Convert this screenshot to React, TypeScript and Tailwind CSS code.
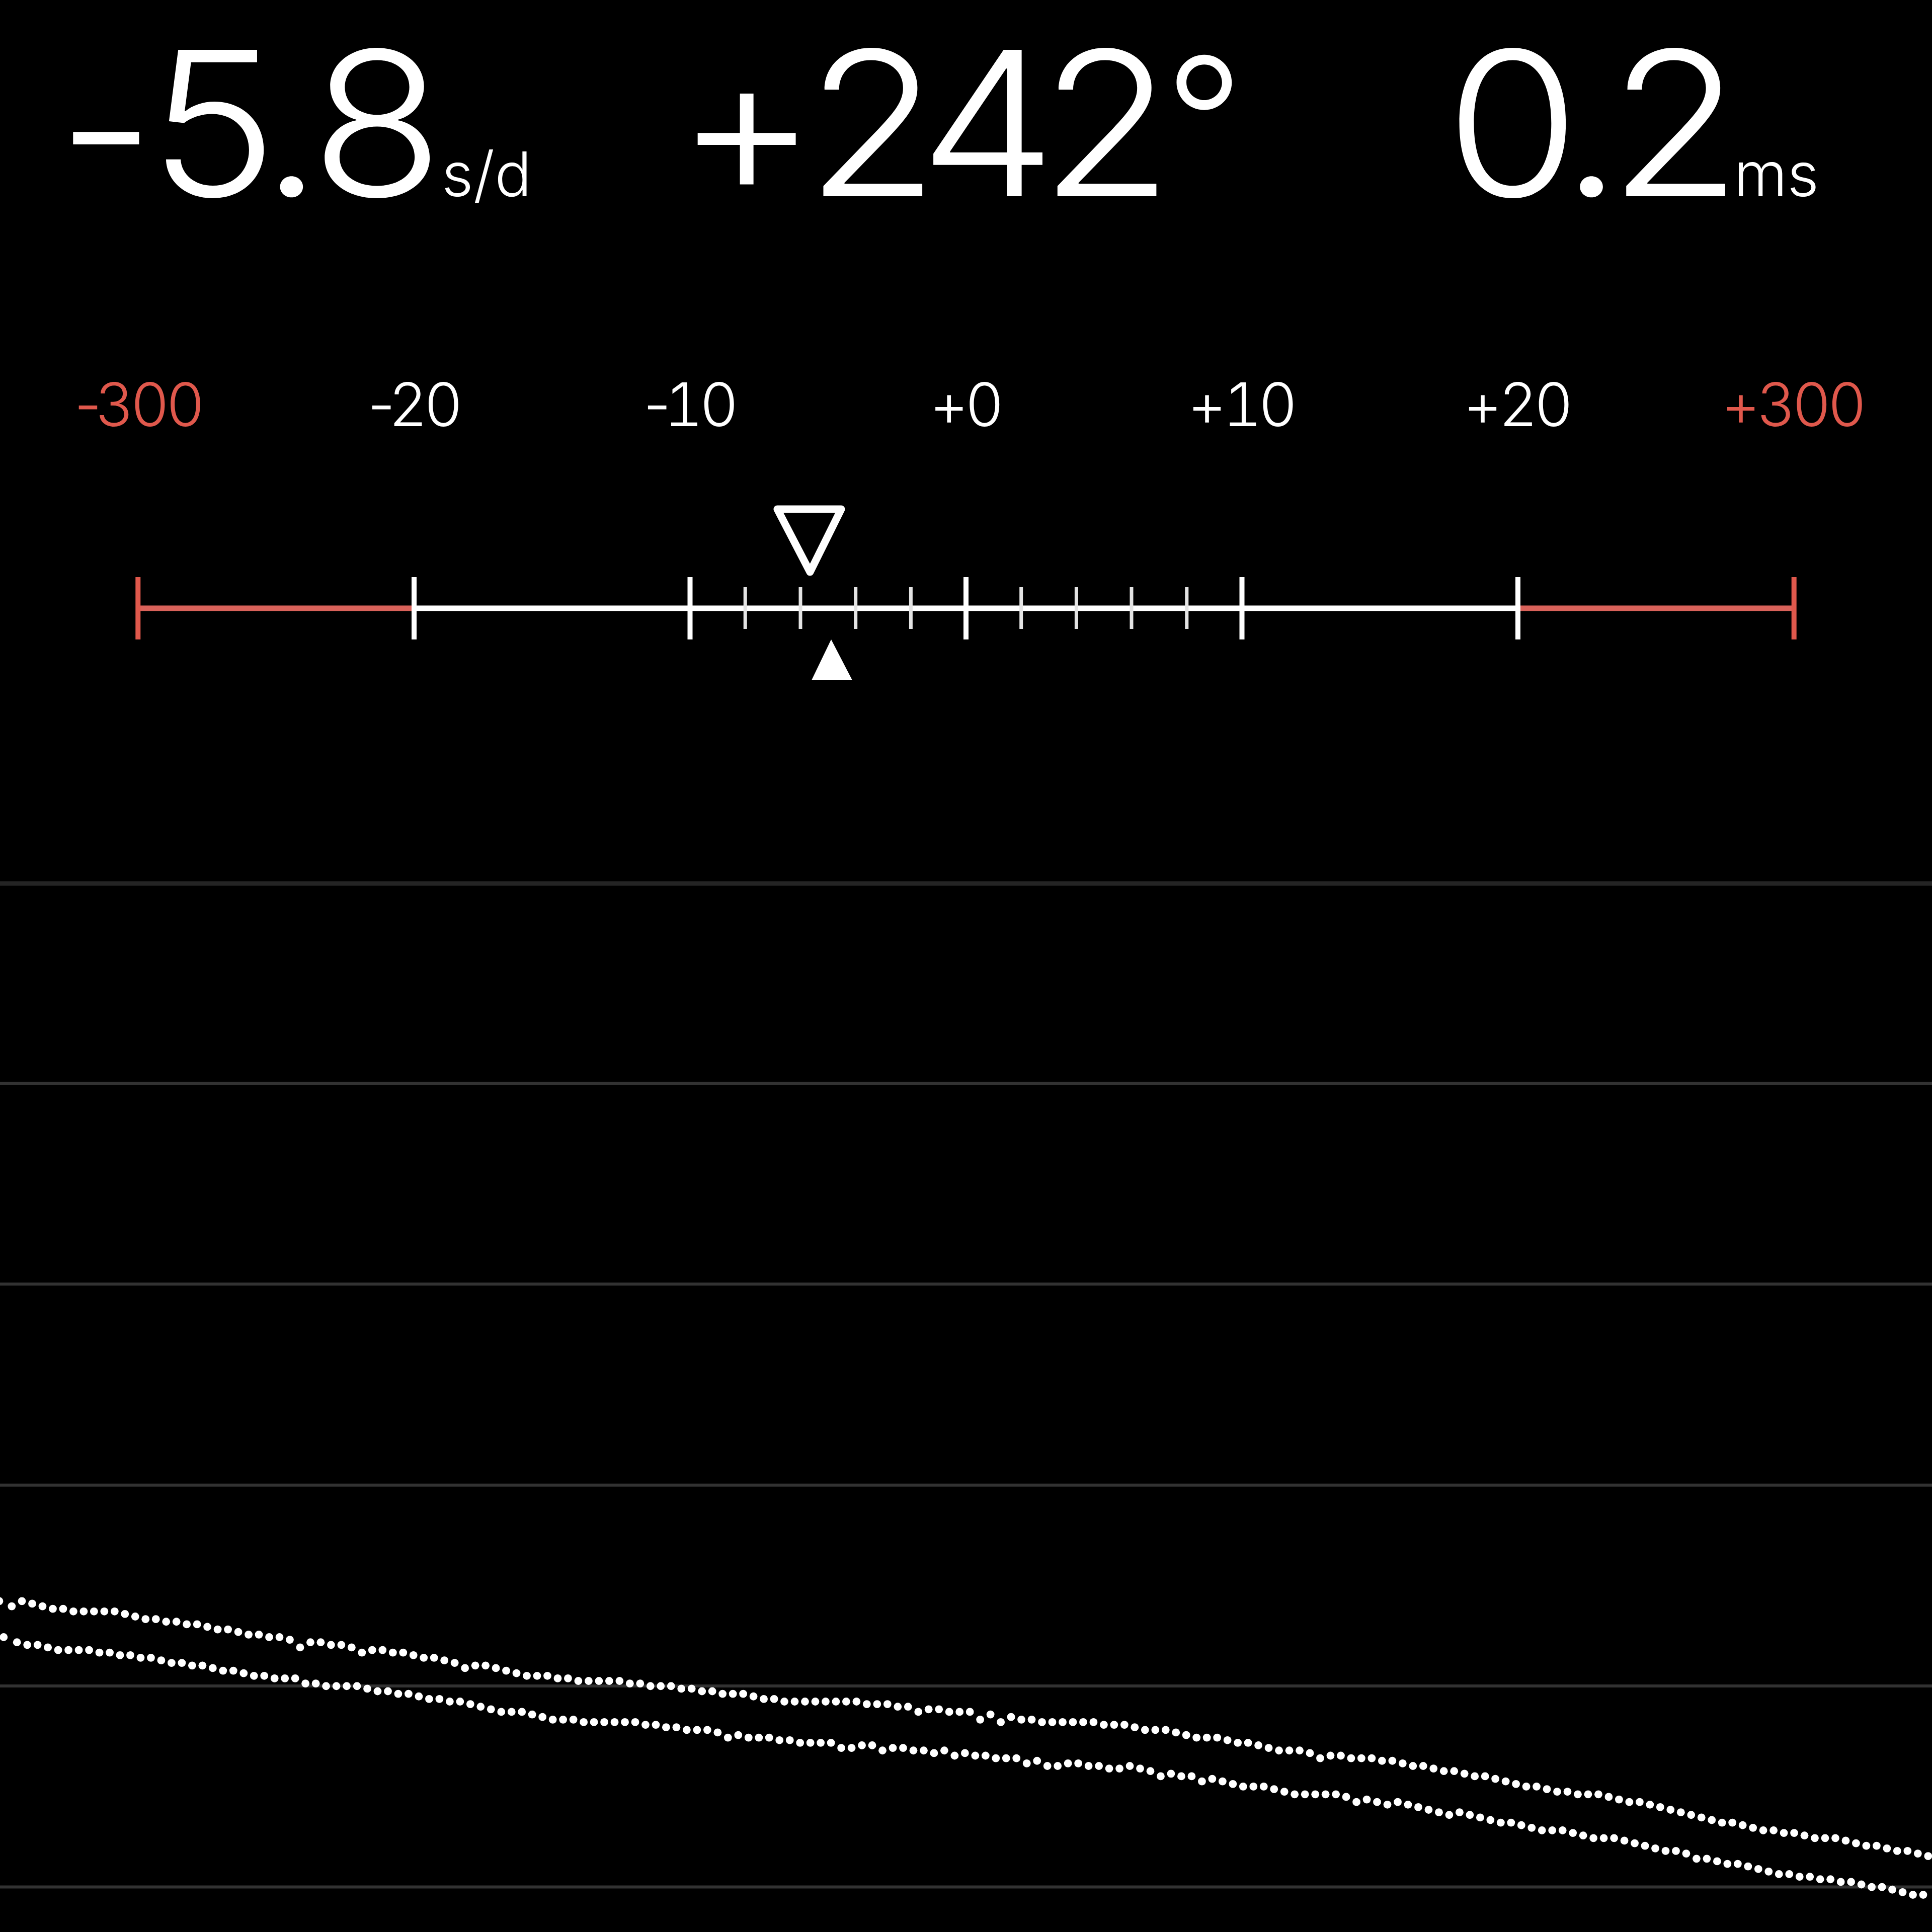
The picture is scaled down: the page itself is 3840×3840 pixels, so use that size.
const DOT_STEP = 20.48
const LEVEL_STEP = 5.12

const GRID_LINES = [753, 1152.3, 1551.7, 1951, 2350.5]

// Beat levels, one entry per recorded tick / tock
const TICKS = [
  0, 1, 2, 3, 3, 4, 4, 4, 4, 4, 5, 6, 7, 7, 8, 8, 9, 9, 10, 11, 11, 12, 13, 13, 14, 14, 15, 18, 16, 16,
  17, 17, 18, 20, 19, 19, 20, 20, 21, 22, 22, 23, 24, 26, 25, 25, 26, 27, 28, 29, 29, 29, 30, 30, 31, 31,
  31, 31, 31, 32, 32, 33, 33, 33, 34, 34, 35, 35, 36, 36, 36, 37, 38, 38, 39, 39, 39, 39, 39, 39, 39, 39,
  40, 40, 40, 41, 41, 43, 42, 42, 43, 43, 43, 46, 44, 47, 45, 46, 46, 47, 47, 47, 47, 47, 47, 48, 48, 48,
  49, 50, 50, 50, 51, 52, 53, 53, 53, 54, 55, 55, 56, 57, 58, 58, 58, 59, 61, 60, 60, 61, 61, 61, 62, 62,
  63, 64, 64, 65, 66, 66, 67, 68, 68, 69, 70, 71, 72, 72, 73, 74, 74, 75, 75, 75, 76, 77, 78, 78, 79, 80,
  81, 82, 83, 84, 85, 86, 86, 87, 88, 89, 89, 90, 90, 91, 92, 92, 92, 93, 94, 95, 95, 96, 97, 97, 98, 99,
]

const TOCKS = [
  16, 17, 17, 18, 19, 19, 19, 19, 20, 20, 21, 21, 22, 22, 23, 24, 24, 25, 25, 26, 27, 27, 28, 29, 29, 30,
  30, 30, 32, 32, 33, 33, 33, 33, 34, 35, 35, 36, 36, 37, 38, 38, 39, 39, 40, 41, 42, 43, 43, 43, 44, 45,
  46, 46, 46, 47, 47, 47, 47, 47, 47, 48, 48, 49, 49, 50, 50, 50, 51, 53, 52, 53, 53, 53, 54, 54, 55, 55,
  55, 55, 57, 57, 56, 56, 58, 57, 57, 58, 58, 59, 58, 60, 59, 60, 60, 61, 61, 61, 63, 62, 64, 64, 63, 63,
  64, 64, 65, 65, 64, 65, 66, 68, 67, 68, 68, 70, 69, 70, 71, 72, 72, 72, 73, 74, 75, 75, 75, 75, 75, 76,
  78, 77, 78, 79, 78, 79, 80, 81, 82, 83, 82, 83, 84, 85, 86, 86, 87, 88, 89, 89, 89, 90, 91, 92, 92, 92,
  93, 94, 95, 96, 97, 97, 98, 100, 100, 101, 102, 102, 103, 104, 105, 106, 106, 107, 107, 108, 108, 109,
  109, 110, 111, 111, 112, 113, 114, 114,
]

const LABELS = [
  { sign: '-', digits: '300', color: 'text-[#e0584c]' },
  { sign: '-', digits: '20', color: 'text-white' },
  { sign: '-', digits: '10', color: 'text-white' },
  { sign: '+', digits: '0', color: 'text-white' },
  { sign: '+', digits: '10', color: 'text-white' },
  { sign: '+', digits: '20', color: 'text-white' },
  { sign: '+', digits: '300', color: 'text-[#e0584c]' },
]

const valueClass = 'inline-block origin-left scale-x-108 text-[400px] leading-none font-[320]'
const unitClass = 'text-[122px] leading-none font-light'

function Readouts() {
  return (
    <header className="flex h-[744px] pt-[44px] whitespace-nowrap">
      <div className="flex w-[1280px] items-baseline pl-[113px]">
        <span className={`${valueClass} tracking-[-0.03em]`}>
          <span className="relative top-[9px]">-</span>5<span className="-ml-[19px]">.8</span>
        </span>
        <span className={`${unitClass} ml-[65px]`}>s/d</span>
      </div>
      <div className="flex w-[1560px] items-baseline pl-[63px]">
        <span className={`${valueClass} tracking-[-0.075em]`}>
          <span className="mr-[8px]">+</span>242
        </span>
        <span className="relative -top-[27px] ml-[86px] text-[346px] leading-none font-[360]">°</span>
      </div>
      <div className="flex items-baseline pl-[33px]">
        <span className={`${valueClass} tracking-[-0.062em]`}>0.2</span>
        <span className={`${unitClass} ml-[52px]`}>ms</span>
      </div>
    </header>
  )
}

function ScaleLabels() {
  return (
    <div className="grid h-[256px] grid-cols-7 pr-[4px] text-center text-[120px] leading-none font-light tracking-[-0.06em]">
      {LABELS.map(({ sign, digits, color }) => (
        <span key={sign + digits} className={color}>
          <span className={sign === '+' ? 'tabular-nums' : '-mr-[6px]'}>{sign}</span>
          <span className="tabular-nums">{digits}</span>
        </span>
      ))}
    </div>
  )
}

function Gauge() {
  const major = [823, 1371.5, 1920, 2468.5, 3017]
  const minor = [1481.2, 1591, 1700.7, 1810.4, 2029.7, 2139.4, 2249, 2358.8]

  return (
    <svg className="block h-[400px] w-full" viewBox="0 0 3840 400">
      <path d="M274 209H823M3017 209H3566" stroke="#d9625a" strokeWidth="11" />
      <path d="M274.3 147V271M3565.7 147V271" stroke="#e0584c" strokeWidth="10" />
      <path d="M823 209H3017" stroke="#fff" strokeWidth="11" />
      {major.map((x) => (
        <path key={x} d={`M${x} 147V271`} stroke="#fff" strokeWidth="10" />
      ))}
      {minor.map((x) => (
        <path key={x} d={`M${x} 167V250`} stroke="#e4e4e4" strokeWidth="7" />
      ))}
      <path d="M1545 12H1672L1610 137Z" fill="none" stroke="#fff" strokeWidth="15" strokeLinejoin="round" />
      <path d="M1652 271L1694 352H1613Z" fill="#fff" />
    </svg>
  )
}

function Trace({ levels, start }: { levels: number[]; start: number }) {
  return (
    <g fill="#fff">
      {levels.map((level, i) => (
        <circle key={i} cx={start + i * DOT_STEP} cy={1782.3 + level * LEVEL_STEP} r="7.9" />
      ))}
    </g>
  )
}

function Chart() {
  return (
    <svg className="block h-[2440px] w-full" viewBox="0 0 3840 2440">
      <path d="M0 356H3840" stroke="#242424" strokeWidth="9" />
      {GRID_LINES.map((y) => (
        <path key={y} d={`M0 ${y}H3840`} stroke="#323232" strokeWidth="6" />
      ))}
      {/* first beats come in off the regular step */}
      <Trace levels={[0]} start={-1.5} />
      <Trace levels={[2]} start={23.3} />
      <Trace levels={TICKS} start={43.5} />
      <Trace levels={[14]} start={7.3} />
      <Trace levels={TOCKS} start={33.7} />
    </svg>
  )
}

export default function App() {
  return (
    <main className="h-[3840px] w-[3840px] overflow-hidden bg-black font-['Inter',sans-serif] text-white">
      <Readouts />
      <ScaleLabels />
      <Gauge />
      <Chart />
    </main>
  )
}
